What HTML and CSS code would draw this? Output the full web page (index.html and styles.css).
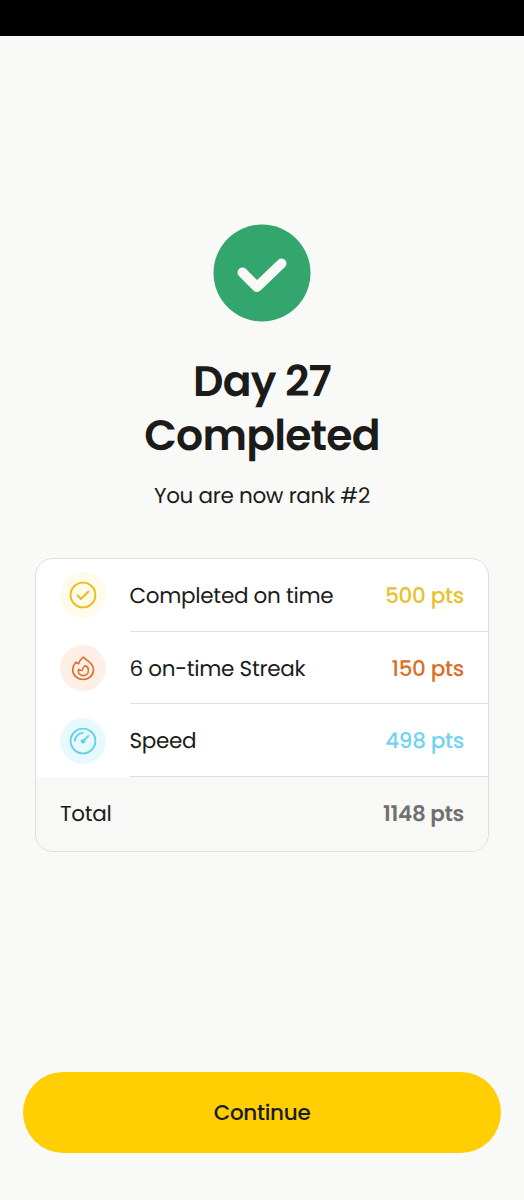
FILE: index.html
```html
<!DOCTYPE html>
<html lang="en">
<head>
    <meta charset="UTF-8">
    <meta name="viewport" content="width=device-width, initial-scale=1.0">
    <title>Day 27 Completed</title>
    <link rel="stylesheet" href="styles.css">
</head>
<body>
    <div class="status-bar"></div>

    <main>
        <svg class="badge" viewBox="0 0 98 98" fill="none">
            <circle cx="49" cy="49" r="48.5" fill="#32a66c"/>
            <path d="M29.500 48.500L44 63L68.500 39.500" stroke="#f9faf8" stroke-width="10" stroke-linecap="round" stroke-linejoin="round"/>
        </svg>

        <h1>Day 27<br>Completed</h1>
        <p class="rank">You are now rank #2</p>

        <div class="score-card">
            <div class="row">
                <svg class="icon on-time" viewBox="0 0 46 46">
                    <circle cx="23" cy="23" r="12.4"/>
                    <path d="M17.500 23.300L21 27L28.500 19.500"/>
                </svg>
                <div class="line">
                    <span>Completed on time</span>
                    <span class="points yellow">500 pts</span>
                </div>
            </div>
            <div class="row">
                <svg class="icon streak" viewBox="0 0 46 46">
                    <path d="M23.300 12.200C21 14 19.500 16 18.600 18.700C17.600 18.500 16.700 18 15.800 17.200C13.800 19.500 12.700 22 12.700 24.700C12.700 30.300 17.300 34.500 23.100 34.500C29 34.500 33.500 30.300 33.500 24.700C33.500 19.300 29.300 17.300 26.500 14.800C25.200 13.600 24.400 12.900 23.300 12.200Z"/>
                    <path d="M18.600 24.300C17.400 27.800 19.700 30.600 23.200 30.600C26.200 30.600 28.400 28.400 28.400 25.500C28.400 22.900 26.800 21.200 24.900 20.900C23.200 21.900 22.400 23.300 22.100 25.500C21 25.500 19.700 25.200 18.600 24.300Z"/>
                </svg>
                <div class="line">
                    <span>6 on-time Streak</span>
                    <span class="points orange">150 pts</span>
                </div>
            </div>
            <div class="row">
                <svg class="icon speed" viewBox="0 0 46 46">
                    <circle cx="23" cy="23" r="12.4"/>
                    <path d="M14.900 22.800A8.300 8.300 0 0 1 22.700 14.900"/>
                    <path d="M23.500 22.800L28.300 18"/>
                    <circle class="dot" cx="23" cy="23.200" r="2.300"/>
                </svg>
                <div class="line">
                    <span>Speed</span>
                    <span class="points blue">498 pts</span>
                </div>
            </div>
            <div class="total">
                <span>Total</span>
                <span class="points grey">1148 pts</span>
            </div>
        </div>
    </main>

    <button class="continue">Continue</button>
</body>
</html>
```
FILE: styles.css
```css
* {
    box-sizing: border-box;
}

body {
    margin: 0;
    height: 1200px;
    display: flex;
    flex-direction: column;
    background-color: #f9faf8;
    color: #1b1b19;
    font-family: Poppins, Inter, sans-serif;
    font-size: 21.5px;
    letter-spacing: -0.3px;
    text-rendering: geometricPrecision;
}

.status-bar {
    height: 36px;
    background-color: #000;
}

main {
    flex: 1;
    display: flex;
    flex-direction: column;
    align-items: center;
    padding: 188px 35px 0;
}

.badge {
    width: 98px;
    height: 98px;
}

h1 {
    margin: 32px 0 0;
    font-size: 42.5px;
    line-height: 54px;
    font-weight: 600;
    letter-spacing: -0.8px;
    text-align: center;
}

.rank {
    margin: 17px 0 0;
    line-height: 33px;
}

.score-card {
    width: 454px;
    height: 294px;
    margin-top: 46px;
    display: grid;
    grid-template-rows: repeat(3, 72.7px) 1fr;
    border: 1px solid #dededc;
    border-radius: 18px;
    background-color: #fff;
    overflow: hidden;
}

.row {
    display: flex;
    align-items: center;
    padding-left: 24px;
}

.icon {
    width: 46px;
    height: 46px;
    margin-right: 23.5px;
    border-radius: 50%;
    fill: none;
    stroke: currentColor;
    stroke-width: 1.9;
    stroke-linecap: round;
    stroke-linejoin: round;
}

.on-time {
    color: #e9bd1c;
    background-color: #fffaea;
}

.streak {
    color: #d9702b;
    background-color: #feefe6;
    stroke-width: 1.6;
}

.speed {
    color: #63d2e9;
    background-color: #e8f9fe;
}

.dot {
    fill: currentColor;
    stroke: none;
}

.line {
    flex: 1;
    align-self: stretch;
    display: flex;
    align-items: center;
    justify-content: space-between;
    padding: 1px 24px 0 0;
    border-bottom: 1px solid #dededc;
}

.total {
    display: flex;
    align-items: center;
    justify-content: space-between;
    padding: 0 24px 1px;
    background-color: #f8f8f6;
}

.points {
    font-weight: 500;
}

.yellow {
    color: #e6c22e;
}

.orange {
    color: #db6f26;
}

.blue {
    color: #71d3ee;
}

.grey {
    color: #70706e;
    font-weight: 600;
}

.continue {
    height: 81px;
    margin: 0 23px 47px;
    border: none;
    border-radius: 41px;
    background-color: #ffce03;
    color: #1b1b19;
    font: inherit;
    font-weight: 500;
    letter-spacing: inherit;
    cursor: pointer;
}
```
